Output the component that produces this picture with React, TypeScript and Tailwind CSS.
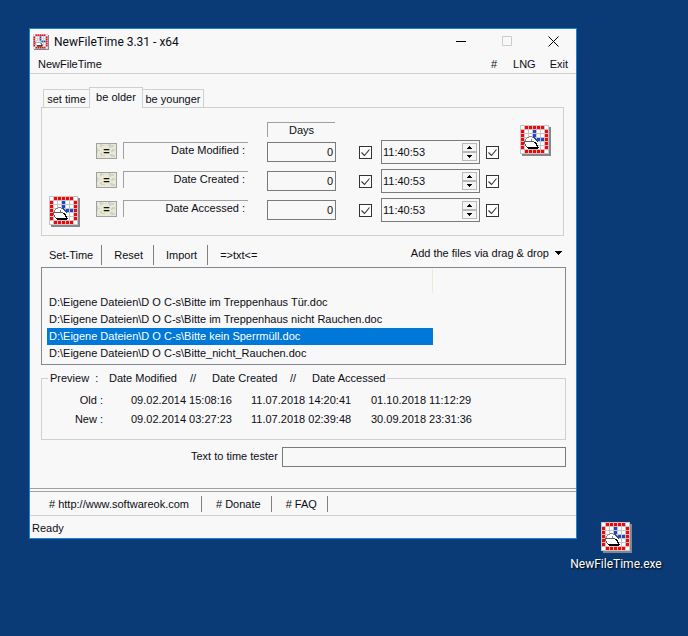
import { useState } from "react";

const TABS = [
  { name: "set time", width: "w-[46px]" },
  { name: "be older", width: "w-[54px]" },
  { name: "be younger", width: "w-[61px]" },
];

const DATE_ROWS = [
  { id: "modified", label: "Date Modified :" },
  { id: "created", label: "Date Created :" },
  { id: "accessed", label: "Date Accessed :" },
];

const FILES = [
  "D:\\Eigene Dateien\\D O C-s\\Bitte im Treppenhaus Tür.doc",
  "D:\\Eigene Dateien\\D O C-s\\Bitte im Treppenhaus nicht Rauchen.doc",
  "D:\\Eigene Dateien\\D O C-s\\Bitte kein Sperrmüll.doc",
  "D:\\Eigene Dateien\\D O C-s\\Bitte_nicht_Rauchen.doc",
];

const PREVIEW = [
  { label: "Old :", values: ["09.02.2014 15:08:16", "11.07.2018 14:20:41", "01.10.2018 11:12:29"] },
  { label: "New :", values: ["09.02.2014 03:27:23", "11.07.2018 02:39:48", "30.09.2018 23:31:36"] },
];

const CELLS = [0, 1, 2, 3, 4, 5, 6];

function cellColor(col: number, row: number) {
  const edgeX = col === 0 || col === 6;
  const edgeY = row === 0 || row === 6;
  if (edgeX && edgeY) return "#ffffff";
  if (edgeX || edgeY) return "#ff0000";
  if (col === 3 && row < 3) return "#1f47c8";
  if (row === 3 && col > 3) return "#1f47c8";
  return "#ffffff";
}

function AppIcon({ size }: { size: number }) {
  return (
    <svg width={size} height={size} viewBox="0 0 31 31" shapeRendering={size > 20 ? "crispEdges" : "auto"} aria-hidden="true">
      <rect x="2" y="2" width="29" height="29" fill="#84888c" />
      <rect width="29" height="29" fill="#c6c6ca" />
      {CELLS.map((row) =>
        CELLS.map((col) => (
          <rect key={`${row}-${col}`} x={1 + col * 4} y={1 + row * 4} width="3" height="3" fill={cellColor(col, row)} />
        )),
      )}
      {/* rounded sheet sticking out of an open folder */}
      <path d="M5 17v-3h1v-1h1v-1h2v-1h3v1h2v1h1v1h2v1h1v2h1v2z" fill="#ffffff" />
      <path d="M5 14h1v2H5zM6 13h1v1H6zM7 12h2v1H7zM9 11h3v1H9zM12 12h1v1h-1zM11 14h1v2h-1z" fill="#84888e" />
      <path d="M13 12h2v1h1v1h1v1h1v2h-1v-1h-1v-1h-1v-1h-1v-1h-1z" fill="#23509c" />
      <path d="M4 16h11v1h2v4h1v1H7v-1H6v-2H5v-2H4z" fill="#ffffff" />
      <path d="M4 16h10v1H4zM4 17h1v2H4zM5 19h1v2H5zM6 21h1v1H6z" fill="#5c5c5c" />
      <path d="M7 22h10v1h1v1H8v-1H7zM14 17h2v1h1v2h1v2h1v1h-2v-2h-1v-2h-1v-1h-1z" fill="#000000" />
    </svg>
  );
}

function CheckBox({ label }: { label: string }) {
  return (
    <label className="relative mt-1.5 block size-[13px]">
      <input type="checkbox" defaultChecked aria-label={label} className="peer block size-[13px] appearance-none border border-[#333] bg-white" />
      <svg className="pointer-events-none absolute inset-0 hidden peer-checked:block" width="13" height="13" viewBox="0 0 13 13" aria-hidden="true">
        <path d="M2.5 6.5l3 3 5-6" fill="none" stroke="#333" strokeWidth="1.1" />
      </svg>
    </label>
  );
}

function SpinButton({ up }: { up?: boolean }) {
  return (
    <button aria-label={up ? "Increase" : "Decrease"} className="flex h-[9px] w-[15px] items-center justify-center border border-[#b8b8b8] bg-[#f4f4f4]">
      <svg width="5" height="3" viewBox="0 0 5 3" shapeRendering="crispEdges" aria-hidden="true">
        <path d={up ? "M2 0h1v1h1v1h1v1H0V2h1V1h1z" : "M0 0h5v1H4v1H3v1H2V2H1V1H0z"} />
      </svg>
    </button>
  );
}

function EqualsButton({ label }: { label: string }) {
  return (
    <button aria-label={label} className="relative mt-[3px] h-4 w-[21px] overflow-hidden border border-[#a0a0a0] bg-[#e9ead2] font-bold">
      <svg className="absolute inset-0" width="19" height="14" viewBox="0 0 19 14" shapeRendering="crispEdges" aria-hidden="true">
        <path
          d="M3 0h2v1h2v1H5v1H3zM11 0h3v1h3v2h-3v1h-2V2h-1zM0 4h1v2h2v1H1v2H0zM15 5h3v2h-2v1h-2V6h1zM3 9h2v2h3v1H4v-1H3zM13 10h3v1h2v2h-4v-1h-1zM8 1h1v1H8zM1 12h1v1H1z"
          fill="#d0d0cc"
        />
      </svg>
      <span className="relative block leading-[14px]">=</span>
    </button>
  );
}

function DateRow({ id, label }: { id: string; label: string }) {
  return (
    <div className="flex h-6 items-start">
      <EqualsButton label={`Copy ${id}`} />
      <label htmlFor={id} className="mt-0.5 ml-1.5 h-[17px] w-[125px] border-t border-l border-[#a0a0a0] pr-[3px] text-right leading-[15px]">
        {label}
      </label>
      <input id={id} type="text" defaultValue="0" className="mt-0.5 ml-[19px] h-5 w-[69px] border border-[#7a7a7a] pr-[2px] text-right" />
      <div className="ml-[23px]">
        <CheckBox label={`Change date ${id}`} />
      </div>
      <div className="ml-[9px] flex h-6 w-[99px] items-center border border-[#7a7a7a] pr-0.5">
        <input type="text" aria-label={`Time ${id}`} defaultValue="11:40:53" className="h-5 w-0 grow pl-px" />
        <div className="flex flex-col">
          <SpinButton up />
          <SpinButton />
        </div>
      </div>
      <div className="ml-1.5">
        <CheckBox label={`Change time ${id}`} />
      </div>
    </div>
  );
}

function TitleBar() {
  return (
    <header className="flex h-[25px] items-center pl-[3px]">
      <AppIcon size={16} />
      <h1 className="ml-[5px] grow font-['Roboto',sans-serif] text-xs">NewFileTime 3.31 - x64</h1>
      <button aria-label="Minimize" className="flex h-6 w-[46px] items-center justify-center">
        <svg width="11" height="11" viewBox="0 0 11 11" aria-hidden="true">
          <path d="M0 5.5h10" stroke="#000" />
        </svg>
      </button>
      <button aria-label="Maximize" disabled className="flex h-6 w-[46px] items-center justify-center">
        <svg width="11" height="11" viewBox="0 0 11 11" aria-hidden="true">
          <path d="M.5.5h9v9h-9z" fill="none" stroke="#ccc" />
        </svg>
      </button>
      <button aria-label="Close" className="flex h-6 w-[46px] items-center justify-center">
        <svg width="11" height="11" viewBox="0 0 11 11" aria-hidden="true">
          <path d="M.5.5l10 10M10.5.5l-10 10" stroke="#000" />
        </svg>
      </button>
    </header>
  );
}

export default function App() {
  const [tab, setTab] = useState("be older");
  const [selected, setSelected] = useState(2);

  return (
    <div className="relative min-h-screen bg-[#0a3b76] pt-7 pr-[111px] pl-[29px] font-['Liberation_Sans',Arial,sans-serif] text-[11px] leading-4 text-[#0c0c14]">
      <main className="border border-[#1883d7] bg-[#f8f8f8]">
        <TitleBar />
        <nav className="flex h-5 items-center border-b border-[#d0d0d0] px-2">
          <button className="mr-auto">NewFileTime</button>
          <button>#</button>
          <button className="ml-4">LNG</button>
          <button className="ml-3.5">Exit</button>
        </nav>

        <div className="mr-3 ml-[11px] pt-[13px]">
          <div role="tablist" className="flex items-end pl-0.5">
            {TABS.map(({ name, width }) => (
              <button
                key={name}
                role="tab"
                aria-selected={tab === name}
                onClick={() => setTab(name)}
                className={`${width} border border-b-0 border-[#d0d0d0] whitespace-nowrap ${
                  tab === name ? "relative z-10 -mb-px h-[21px] bg-[#f8f8f8] pb-0.5" : "h-[18px] first:border-r-0 last:border-l-0"
                }`}
              >
                {name}
              </button>
            ))}
          </div>

          <section className="flex h-[129px] border border-[#d0d0d0] pl-[7px]">
            <div className="mr-4 self-end pb-2">
              <AppIcon size={31} />
            </div>
            <div className="pt-3.5">
              <div className="mb-[3px] ml-[171px] h-[15px] w-[68px] border-t border-l border-[#a0a0a0] text-center leading-[15px]">Days</div>
              <div className="flex flex-col gap-[5px]">
                {DATE_ROWS.map((row) => (
                  <DateRow key={row.id} id={row.id} label={row.label} />
                ))}
              </div>
            </div>
            <div className="mr-3 ml-auto pt-[17px]">
              <AppIcon size={31} />
            </div>
          </section>
        </div>

        <div className="mr-2.5 ml-[11px]">
          <div className="flex h-[31px] items-center pt-1.5">
            <button className="h-5 border-r border-[#808080] pr-2 pl-2">Set-Time</button>
            <button className="h-5 border-r border-[#808080] pr-2.5 pl-3">Reset</button>
            <button className="h-5 border-r border-[#808080] pr-2.5 pl-3">Import</button>
            <button className="h-5 pl-3">=&gt;txt&lt;=</button>
            <button className="mr-1 mb-1 ml-auto flex items-center gap-1.5">
              Add the files via drag &amp; drop
              <svg width="7" height="4" viewBox="0 0 7 4" shapeRendering="crispEdges" aria-hidden="true">
                <path d="M0 0h7v1H6v1H5v1H4v1H3V3H2V2H1V1H0z" />
              </svg>
            </button>
          </div>

          <div className="h-[98px] border border-[#828790] px-[5px] pt-px">
            <div className="mb-px h-6 w-[386px] border-r border-[#ebebd0]" />
            <div role="listbox" aria-label="Files" className="w-[386px]">
              {FILES.map((file, i) => (
                <div
                  key={file}
                  role="option"
                  aria-selected={i === selected}
                  onClick={() => setSelected(i)}
                  className={i === selected ? "h-[17px] bg-[#0078d7] pl-0.5 leading-[17px] text-white" : "h-[17px] pl-0.5 leading-[17px]"}
                >
                  {file}
                </div>
              ))}
            </div>
          </div>

          <fieldset className="mt-[5px] h-[70px] border border-[#d0d0d0] pl-1.5">
            <legend className="flex px-0.5">
              <span className="w-[59px]">Preview&nbsp; :</span>
              <span className="w-[81px]">Date Modified</span>
              <span className="w-[22px]">//</span>
              <span className="w-[78px]">Date Created</span>
              <span className="w-[22px]">//</span>
              <span>Date Accessed</span>
            </legend>
            <table className="mt-1">
              <tbody>
                {PREVIEW.map((row) => (
                  <tr key={row.label} className="h-[19px]">
                    <th scope="row" className="w-[83px] p-0 pr-7 text-right font-normal">
                      {row.label}
                    </th>
                    {row.values.map((value) => (
                      <td key={value} className="w-[120px] p-0">
                        {value}
                      </td>
                    ))}
                  </tr>
                ))}
              </tbody>
            </table>
          </fieldset>

          <div className="mt-[7px] flex">
            <label htmlFor="tester" className="ml-[150px] w-[91px] shrink-0 leading-[18px]">
              Text to time tester
            </label>
            <input id="tester" type="text" className="h-5 min-w-0 grow border border-[#7a7a7a] px-1" />
          </div>
        </div>

        <div className="mt-[21px] h-1 border-y border-[#a0a0a0]" />
        <footer>
          <div className="flex h-6 items-center border-b border-[#d0d0d0] pl-[19px]">
            <a href="#home" className="border-r border-[#808080] pr-3">
              # http://www.softwareok.com
            </a>
            <a href="#donate" className="border-r border-[#808080] pr-2.5 pl-3.5">
              # Donate
            </a>
            <a href="#faq" className="border-r border-[#808080] pr-2.5 pl-3.5">
              # FAQ
            </a>
          </div>
          <p className="h-[22px] pl-0.5 leading-6">Ready</p>
        </footer>
      </main>

      {/* desktop shortcut */}
      <button className="absolute top-[522px] right-[27px] flex w-[90px] flex-col items-center gap-[3px] font-['Roboto',sans-serif] text-xs whitespace-nowrap text-white [text-shadow:1px_1px_2px_#000]">
        <AppIcon size={31} />
        NewFileTime.exe
      </button>
    </div>
  );
}
